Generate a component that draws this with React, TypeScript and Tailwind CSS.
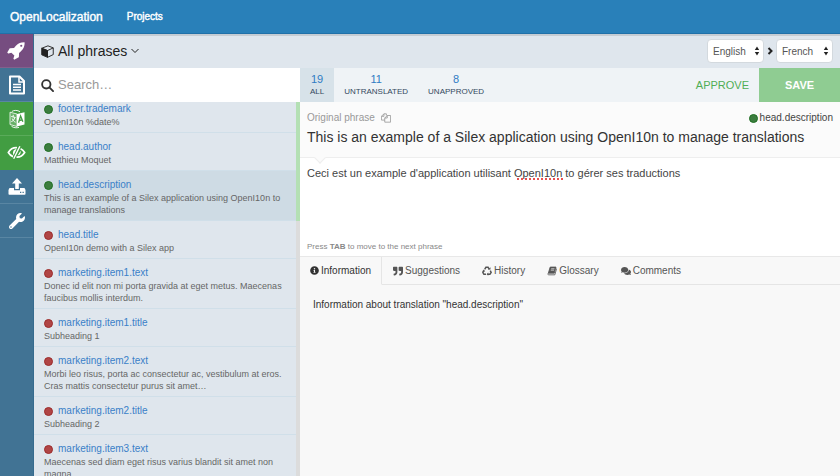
import { useState } from "react";
import type { ReactNode } from "react";
import { FaWrench, FaInfoCircle, FaQuoteRight, FaComments } from "react-icons/fa";

type Phrase = { key: string; text: string; translated: boolean };

const phrases: Phrase[] = [
  { key: "footer.trademark", text: "OpenI10n %date%", translated: true },
  { key: "head.author", text: "Matthieu Moquet", translated: true },
  { key: "head.description", text: "This is an example of a Silex application using OpenI10n to manage translations", translated: true },
  { key: "head.title", text: "OpenI10n demo with a Silex app", translated: false },
  { key: "marketing.item1.text", text: "Donec id elit non mi porta gravida at eget metus. Maecenas faucibus mollis interdum.", translated: false },
  { key: "marketing.item1.title", text: "Subheading 1", translated: false },
  { key: "marketing.item2.text", text: "Morbi leo risus, porta ac consectetur ac, vestibulum at eros. Cras mattis consectetur purus sit amet…", translated: false },
  { key: "marketing.item2.title", text: "Subheading 2", translated: false },
  { key: "marketing.item3.text", text: "Maecenas sed diam eget risus varius blandit sit amet non magna.", translated: false },
];

function RocketIcon() {
  return (
    <svg viewBox="0 0 1792 1792" className="h-[19px] w-[19px]" fill="currentColor">
      <path d="M1440 448q0-40-28-68t-68-28-68 28-28 68 28 68 68 28 68-28 28-68zm224-288q0 249-75.5 430.5t-253.5 360.5q-81 80-195 176l-20 379q-2 16-16 26l-384 224q-7 4-16 4-12 0-23-9l-64-64q-13-14-8-32l85-276-281-281-276 85q-3 1-9 1-14 0-23-9l-64-64q-17-19-5-39l224-384q10-14 26-16l379-20q96-114 176-195 188-187 358-258t431-71q14 0 24 9.500t10 22.500z" />
    </svg>
  );
}

function FileIcon() {
  return (
    <svg viewBox="0 0 18 20" className="h-5 w-[18px]" fill="none" stroke="currentColor" strokeWidth="2">
      <path d="M2 1.500h9.500L16 6v12.500H2z" strokeLinejoin="round" />
      <path d="M11 1.500V7h5" strokeWidth="1.500" />
      <path d="M5 9.500h8M5 12.300h8M5 15.100h8" strokeWidth="1.500" />
    </svg>
  );
}

function TranslateIcon() {
  return (
    <svg viewBox="0 0 18 20" className="h-5 w-[18px]" fill="none" stroke="currentColor">
      <path d="M9 5 2 3.200v12.300l7 2z" fill="currentColor" fillOpacity=".2" strokeWidth=".8" />
      <path d="M3.200 7.500l4.300 1M5.200 5.800v2M6.700 8.500c-.4 2.300-1.700 3.500-3.400 4.200M4.200 9.500c.5 1.800 1.700 3 3.300 3.700" strokeWidth="1" />
      <path d="M9 5 16.500 3.200v12.300L9 17.500z" fill="currentColor" stroke="none" />
      <path d="M10.500 13.800 12.600 7l2.300 5.700M11.300 11.500l3-.6" stroke="#429d42" strokeWidth="1.300" />
      <path d="M3.500 17.300c2 1.500 5 1.900 7.500 1.100M3.800 2.500C6 1 9.500 1 12 2.700" strokeWidth=".9" />
    </svg>
  );
}

function EyeOffIcon() {
  return (
    <svg viewBox="0 0 20 16" className="h-[15px] w-[19px]" fill="none" stroke="currentColor">
      <path d="M10.500 2.900C6 2.700 3 5 1.300 8c1.200 2 2.800 3.600 5 4.400" strokeWidth="1.800" />
      <path d="M14.400 3.900c1.900.9 3.300 2.300 4.300 4.100-1.800 3-4.700 5.100-8.700 4.900" strokeWidth="1.800" />
      <path d="M10 4.300C6.500 4.500 5.500 8 6.800 11l1.200-2.500z" fill="currentColor" stroke="none" />
      <path d="M14.400 6c.5 2.600-.8 4.700-3.200 5.300z" fill="currentColor" stroke="none" />
      <path d="M13.600 1.300 7 14.700" strokeWidth="1.500" />
    </svg>
  );
}

function UploadIcon() {
  return (
    <svg viewBox="0 0 18 17" className="h-[17px] w-[18px]" fill="currentColor">
      <path d="M9 0 14 5.500h-3.200V11H7.200V5.500H4z" />
      <path fillRule="evenodd" d="M1.500 10H6v2.200h6V10h4.500L17.500 12v4q0 .8-.8.8H1.300q-.8 0-.8-.8v-4zM12 13.800v1.200h1.300v-1.200zM14.500 13.800v1.200h1.300v-1.200z" />
    </svg>
  );
}

function CubeIcon() {
  return (
    <svg viewBox="0 0 14 14" className="h-[13px] w-[13px]" fill="none" stroke="currentColor" strokeLinejoin="round">
      <path d="M.8 3.500 7 6v7.300L.8 10.600z" fill="currentColor" />
      <path d="M.8 3.500 7.500.9l5.700 2.200v7.200L7 13.300V6z" />
      <path d="M7 6l6.200-2.900" />
    </svg>
  );
}

function SearchIcon() {
  return (
    <svg viewBox="0 0 14 14" className="h-[13px] w-[13px]" fill="none" stroke="currentColor" strokeWidth="2">
      <circle cx="5.700" cy="5.700" r="4.500" />
      <path d="M9 9l4 4" strokeLinecap="round" />
    </svg>
  );
}

function CopyIcon() {
  return (
    <svg viewBox="0 0 12 12" className="h-[10px] w-[10px]" fill="none" stroke="currentColor">
      <path d="M4.500 8.500h-4V4L3.500 1h3v2M3.500 1v3h-3" />
      <path d="M7.500 3h4v8h-7V6zM7.500 3v3h-3" />
    </svg>
  );
}

function RecycleIcon() {
  return (
    <svg viewBox="0 0 12 12" className="h-[10px] w-[10px]" fill="none" stroke="currentColor" strokeWidth="1.800">
      <path d="M3.200 4 4.700 1.500h2.600L8.800 4" />
      <path d="M9.900 5.500 11 7.800 9.500 10H6.800" />
      <path d="M4.800 10H2.300L1 7.800 2.100 5.700" />
      <path d="M7.200 4.300h3V1.600zM7.500 7.800v4L5.500 10zM.2 6.500l2-2.300 1.700 2.500z" fill="currentColor" stroke="none" />
    </svg>
  );
}

function BookIcon() {
  return (
    <svg viewBox="0 0 12 12" className="h-[10px] w-[10px]" fill="none" stroke="currentColor">
      <path d="M3.800 1.300h7L8.700 8.600H1.600z" fill="currentColor" />
      <path d="M1.600 8.600C.7 9.600 1 10.600 2 10.600h7.400l2.100-7.500" />
      <path d="M5 3.300h4M4.500 5h4" stroke="#f8f8f8" strokeWidth=".8" />
    </svg>
  );
}

function Chevron({ className, d }: { className: string; d: string }) {
  return (
    <svg viewBox="0 0 8 8" className={className} fill="none" stroke="currentColor">
      <path d={d} />
    </svg>
  );
}

function Dot({ ok }: { ok: boolean }) {
  return (
    <span
      className={
        ok
          ? "h-[9px] w-[9px] shrink-0 rounded-full border border-[#1f6f22] bg-[#3c7d3f]"
          : "h-[9px] w-[9px] shrink-0 rounded-full border border-[#9c2a2a] bg-[#b04545]"
      }
    />
  );
}

const rail: { label: string; color: string; icon: ReactNode }[] = [
  { label: "Launch", color: "bg-[#764d80] border-[#83608c]", icon: <RocketIcon /> },
  { label: "Files", color: "bg-[#417394] border-[#5986a3]", icon: <FileIcon /> },
  { label: "Translate", color: "bg-[#429d42] border-[#5aab5a]", icon: <TranslateIcon /> },
  { label: "Review", color: "bg-[#429d42] border-[#429d42]", icon: <EyeOffIcon /> },
  { label: "Upload", color: "bg-[#417394] border-[#5986a3]", icon: <UploadIcon /> },
  { label: "Settings", color: "bg-[#417394] border-[#5986a3]", icon: <FaWrench className="h-4 w-4" /> },
];

const filters = [
  { count: 19, label: "ALL" },
  { count: 11, label: "UNTRANSLATED" },
  { count: 8, label: "UNAPPROVED" },
];

const tabs: { label: string; icon: ReactNode }[] = [
  { label: "Information", icon: <FaInfoCircle className="h-[9px] w-[9px]" /> },
  { label: "Suggestions", icon: <FaQuoteRight className="h-[10px] w-[10px]" /> },
  { label: "History", icon: <RecycleIcon /> },
  { label: "Glossary", icon: <BookIcon /> },
  { label: "Comments", icon: <FaComments className="h-[10px] w-[10px]" /> },
];

function LanguageSelect({ label, value }: { label: string; value: string }) {
  return (
    <div className="relative">
      <select
        aria-label={label}
        defaultValue={value}
        className="block h-6 w-[57px] appearance-none rounded border border-[#d3d9de] bg-white pl-[5px] text-[10px] text-[#555]"
      >
        <option>English</option>
        <option>French</option>
      </select>
      <svg viewBox="0 0 6 10" className="pointer-events-none absolute top-[7px] right-1 h-[10px] w-[6px]" fill="#222">
        <path d="M3 .5 5.200 4H.8zM3 9.500.8 6h4.400z" />
      </svg>
    </div>
  );
}

export default function App() {
  const [selected, setSelected] = useState("head.description");
  const [tab, setTab] = useState("Information");

  return (
    <div className="flex h-screen flex-col overflow-hidden bg-[#f8f8f8] font-['Liberation_Sans',Arial,sans-serif] text-[#333]">
      <header className="flex h-[34px] shrink-0 items-center gap-6 border-b border-[#2070a8] bg-[#2980b9] px-[10px] text-white">
        <a href="#home" className="text-[12px] [-webkit-text-stroke:0.4px_white]">OpenLocalization</a>
        <a href="#projects" className="text-[10px] [-webkit-text-stroke:0.4px_white]">Projects</a>
      </header>

      <div className="flex min-h-0 flex-1">
        <nav aria-label="Project" className="flex w-[34px] shrink-0 flex-col border-r border-[#366b8e] bg-[#417394]">
          {rail.map((item) => (
            <button
              key={item.label}
              aria-label={item.label}
              className={`flex h-[34px] w-full shrink-0 items-center justify-center border-b text-white ${item.color}`}
            >
              {item.icon}
            </button>
          ))}
        </nav>

        <div className="flex min-w-0 flex-1 flex-col">
          <div className="flex h-[34px] shrink-0 items-center justify-between border-t-2 border-[#c5ccd3] bg-[#dfe6ed] px-[7px] pb-[2px]">
            <button className="flex items-center gap-1 text-[14px] text-[#222]">
              <CubeIcon />
              All phrases
              <Chevron className="h-2 w-2" d="M.5 2 4 5.500 7.500 2" />
            </button>
            <div className="flex items-center gap-[2px] text-[#222]">
              <LanguageSelect label="Source language" value="English" />
              <Chevron className="h-2 w-2 stroke-2" d="M2.500 1 5.500 4 2.500 7" />
              <LanguageSelect label="Target language" value="French" />
            </div>
          </div>

          <div className="flex min-h-0 flex-1">
            <aside className="flex w-[266px] shrink-0 flex-col bg-[#dfe6ed]">
              <div className="flex h-[34px] shrink-0 items-center gap-1 bg-white pl-[7px] text-[#333]">
                <SearchIcon />
                <input
                  type="search"
                  aria-label="Search phrases"
                  placeholder="Search…"
                  className="min-w-0 flex-1 text-[13px] outline-none placeholder:text-[#999]"
                />
              </div>
              <div className="min-h-0 flex-1 overflow-hidden">
                <ul className="-mt-[7px]">
                  {phrases.map((p) => (
                    <li key={p.key}>
                      <button
                        onClick={() => setSelected(p.key)}
                        className={`block w-full border-r-4 pt-[7px] pr-2 pb-[5px] pl-[10px] text-left shadow-[inset_0_-1px_0_#d0dfe9] ${
                          p.translated ? "border-[#b4e0b4]" : "border-[#dcdcdc]"
                        } ${p.key === selected ? "bg-[#cedbe4]" : "bg-[#dfe6ed]"}`}
                      >
                        <span className="flex items-center gap-[5px] text-[10px] leading-[14px] text-[#3a80c8]">
                          <Dot ok={p.translated} />
                          {p.key}
                        </span>
                        <span className="block text-[9px] leading-3 text-[#666]">{p.text}</span>
                      </button>
                    </li>
                  ))}
                </ul>
              </div>
            </aside>

            <main className="flex min-w-0 flex-1 flex-col">
              <div className="flex h-[34px] shrink-0 items-stretch justify-between bg-[#eff3f6]">
                <div className="flex">
                  {filters.map((f, i) => (
                    <button
                      key={f.label}
                      className={`flex flex-col items-center justify-center px-[10px] text-[#34495e] ${i === 0 ? "bg-[#d7e2e9]" : ""}`}
                    >
                      <span className="text-[11px] leading-[13px] text-[#2f7cc4]">{f.count}</span>
                      <span className="text-[8px] leading-3">{f.label}</span>
                    </button>
                  ))}
                </div>
                <div className="flex">
                  <button className="px-[10px] text-[11px] text-[#50ae54]">APPROVE</button>
                  <button className="w-[81px] bg-[#8fcc92] text-[11px] font-bold text-white">SAVE</button>
                </div>
              </div>

              <section className="relative z-10 h-14 shrink-0 border-b border-[#eeeeee] bg-[#fbfbfb] px-[7px] pt-2">
                <div className="flex items-center justify-between leading-4">
                  <span className="flex items-center gap-[6px] text-[10px] text-[#999]">
                    Original phrase
                    <CopyIcon />
                  </span>
                  <span className="flex items-center gap-[2px] text-[10px] text-[#444]">
                    <Dot ok />
                    head.description
                  </span>
                </div>
                <p className="text-[14px] leading-[22px] text-[#333]">
                  This is an example of a Silex application using OpenI10n to manage translations
                </p>
                <span className="absolute -bottom-[5px] left-4 h-2 w-2 rotate-45 border-r border-b border-[#eeeeee] bg-[#fbfbfb]" />
              </section>

              <section className="relative flex h-[98px] shrink-0 flex-col bg-white px-[7px] pt-[7px] pb-[3px]">
                <textarea
                  aria-label="Translation"
                  spellCheck={false}
                  defaultValue="Ceci est un example d'application utilisant OpenI10n to gérer ses traductions"
                  className="min-h-0 flex-1 resize-none overflow-hidden text-[11px] leading-4 text-[#444] outline-none"
                />
                <span className="pointer-events-none absolute top-5 left-[217px] w-[46px] border-b-2 border-dotted border-[#e85050]" />
                <p className="text-[8px] leading-3 text-[#888]">
                  Press <b>TAB</b> to move to the next phrase
                </p>
              </section>

              <div role="tablist" className="flex h-[29px] shrink-0 border-t border-[#e8e8e8]">
                {tabs.map((t) => (
                  <button
                    key={t.label}
                    role="tab"
                    aria-selected={t.label === tab}
                    onClick={() => setTab(t.label)}
                    className={`flex items-center gap-[2px] border-b text-[10px] ${
                      t.label === tab
                        ? "border-r border-r-[#e5e5e5] border-b-transparent px-[10px] text-[#333]"
                        : "border-[#e5e5e5] px-[11px] text-[#555]"
                    }`}
                  >
                    {t.icon}
                    {t.label}
                  </button>
                ))}
                <div className="flex-1 border-b border-[#e5e5e5]" />
              </div>
              <div role="tabpanel" className="px-[13px] pt-3 text-[10px] leading-4 text-[#333]">
                {tab} about translation "{selected}"
              </div>
            </main>
          </div>
        </div>
      </div>
    </div>
  );
}
